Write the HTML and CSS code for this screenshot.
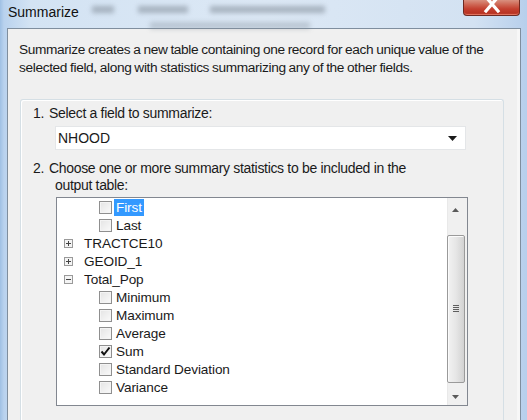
FILE: index.html
```html
<!DOCTYPE html>
<html>
<head>
<meta charset="utf-8">
<link rel="stylesheet" href="styles.css">
</head>
<body>
<div class="window">
  <div class="titlebar">
    <div class="title">Summarize</div>
    <div class="ghosts">
      <span class="ghost g1"></span>
      <span class="ghost g2"></span>
      <span class="ghost g3"></span>
      <span class="ghost g4"></span>
    </div>
    <div class="close">
      <svg width="22" height="13" viewBox="0 0 22 13"><path d="M5 -3 L17 11 M17 -3 L5 11" stroke="#ffffff" stroke-width="3.2" stroke-linecap="square"/></svg>
    </div>
  </div>
  <div class="frame">
    <div class="content">
      <p class="desc">Summarize creates a new table containing one record for each unique value of the selected field, along with statistics summarizing any of the other fields.</p>
      <div class="group">
        <div class="step"><span class="num">1.</span><span class="steptext">Select a field to summarize:</span></div>
        <div class="combo">
          <span class="combo-value">NHOOD</span>
          <svg class="combo-arrow" width="9" height="5" viewBox="0 0 9 5"><path d="M0 0 H9 L4.5 5 Z" fill="#1a1a1a"/></svg>
        </div>
        <div class="step step2"><span class="num">2.</span><span class="steptext hang">Choose one or more summary statistics to be included in the output table:</span></div>
        <div class="listbox">
          <div class="tree">
            <div class="row leaf"><span class="cb"></span><span class="label sel">First</span></div>
            <div class="row leaf"><span class="cb"></span><span class="label">Last</span></div>
            <div class="row node"><svg class="exp" width="9" height="9" viewBox="0 0 9 9"><rect x="0.5" y="0.5" width="8" height="8" fill="#f4f4f4" stroke="#9a9a9a"/><path d="M2 4.5 H7 M4.5 2 V7" stroke="#444" stroke-width="1"/></svg><span class="label">TRACTCE10</span></div>
            <div class="row node"><svg class="exp" width="9" height="9" viewBox="0 0 9 9"><rect x="0.5" y="0.5" width="8" height="8" fill="#f4f4f4" stroke="#9a9a9a"/><path d="M2 4.5 H7 M4.5 2 V7" stroke="#444" stroke-width="1"/></svg><span class="label">GEOID_1</span></div>
            <div class="row node"><svg class="exp" width="9" height="9" viewBox="0 0 9 9"><rect x="0.5" y="0.5" width="8" height="8" fill="#f4f4f4" stroke="#9a9a9a"/><path d="M2 4.5 H7" stroke="#444" stroke-width="1"/></svg><span class="label">Total_Pop</span></div>
            <div class="row leaf"><span class="cb"></span><span class="label">Minimum</span></div>
            <div class="row leaf"><span class="cb"></span><span class="label">Maximum</span></div>
            <div class="row leaf"><span class="cb"></span><span class="label">Average</span></div>
            <div class="row leaf"><span class="cb checked"><svg width="11" height="11" viewBox="0 0 11 11"><path d="M1.5 5.5 L4 8.5 L9.5 1.5" fill="none" stroke="#111" stroke-width="2"/></svg></span><span class="label">Sum</span></div>
            <div class="row leaf"><span class="cb"></span><span class="label">Standard Deviation</span></div>
            <div class="row leaf"><span class="cb"></span><span class="label">Variance</span></div>
          </div>
          <div class="scrollbar">
            <div class="sb-btn"><svg width="7" height="4" viewBox="0 0 7 4"><path d="M0 4 H7 L3.5 0 Z" fill="#5a5a5a"/></svg></div>
            <div class="thumb">
              <div class="grip"><span></span><span></span><span></span><span></span></div>
            </div>
            <div class="sb-btn down"><svg width="7" height="4" viewBox="0 0 7 4"><path d="M0 0 H7 L3.5 4 Z" fill="#5a5a5a"/></svg></div>
          </div>
        </div>
      </div>
    </div>
  </div>
</div>
</body>
</html>
```

FILE: styles.css
```css
html, body {
  margin: 0;
  padding: 0;
}
body {
  width: 527px;
  height: 420px;
  overflow: hidden;
  font-family: "Liberation Sans", Arial, sans-serif;
  font-size: 14px;
  color: #1a1a1a;
}
.window {
  width: 527px;
  height: 420px;
  display: flex;
  flex-direction: column;
  background: linear-gradient(90deg, #9fc0e4 0px, #b9d2ee 4px, #d3e3f3 30px, #dce8f5 50%, #d3e2f2 90%, #b7cfec 100%);
  overflow: hidden;
}
.titlebar {
  height: 28px;
  flex: none;
  display: flex;
  align-items: flex-start;
  position: relative;
}
.title {
  padding: 4px 0 0 8px;
  line-height: 16px;
  font-size: 14px;
  color: #111;
  position: relative;
  z-index: 2;
}
.ghosts {
  position: absolute;
  left: 0;
  top: 0;
  width: 527px;
  height: 28px;
  z-index: 1;
}
.ghost {
  position: absolute;
  display: block;
  height: 7px;
  background: #7d8894;
  filter: blur(2.5px);
  opacity: 0.55;
}
.g1 { left: 92px; top: 6px; width: 22px; }
.g2 { left: 138px; top: 6px; width: 50px; }
.g3 { left: 210px; top: 6px; width: 115px; }
.g4 { left: 150px; top: 22px; width: 160px; opacity: 0.35; }
.close {
  margin-left: auto;
  margin-right: 7px;
  width: 57px;
  height: 16px;
  box-sizing: border-box;
  border: 1px solid #6e2a22;
  border-top: none;
  border-radius: 0 0 4px 4px;
  background: linear-gradient(180deg, #d9907f 0px, #cd6250 5px, #c33f2f 9px, #b93424 13px, #c8553f 16px);
  display: flex;
  justify-content: center;
  align-items: flex-start;
  position: relative;
  z-index: 2;
  box-shadow: inset 0 -1px 0 rgba(255,160,140,0.5);
}
.close svg {
  display: block;
}
.frame {
  flex: 1;
  display: flex;
  padding-left: 7px;
}
.content {
  width: 514px;
  box-sizing: border-box;
  border: 1px solid #7f8e9e;
  border-bottom: none;
  background: #f0f0f0;
  padding: 12px 0 0 11px;
  box-shadow: inset -3px 0 0 #f7f7f7;
}
.desc {
  margin: 0;
  line-height: 18px;
  width: 492px;
  font-size: 13.7px;
  letter-spacing: -0.36px;
  word-spacing: -0.5px;
}
.group {
  margin: 22px 0 0 1px;
  width: 484px;
  height: 340px;
  box-sizing: border-box;
  border: 1px solid #d5dfe5;
  border-bottom: none;
  border-radius: 3px 3px 0 0;
  box-shadow: inset 1px 1px 0 #ffffff;
  padding: 4px 0 0 12px;
}
.step {
  display: flex;
  line-height: 18px;
  letter-spacing: -0.32px;
}
.num {
  width: 16px;
  flex: none;
}
.step2 {
  margin-top: 10px;
  line-height: 17px;
}
.hang {
  padding-left: 6px;
  text-indent: -6px;
  width: 380px;
}
.combo {
  margin: 4px 0 0 22px;
  width: 411px;
  height: 24px;
  box-sizing: border-box;
  border: 1px solid #e4e6e8;
  background: #ffffff;
  display: flex;
  align-items: center;
  padding: 0 8px 0 2px;
}
.combo-value {
  flex: 1;
}
.combo-arrow {
  display: block;
  margin-top: 1px;
}
.listbox {
  margin: 3px 0 0 23px;
  width: 412px;
  height: 209px;
  box-sizing: border-box;
  border: 1px solid #828790;
  background: #ffffff;
  display: flex;
}
.tree {
  flex: 1;
  padding-top: 0;
  font-size: 13.6px;
  letter-spacing: -0.1px;
}
.row {
  height: 18px;
  display: flex;
  align-items: center;
}
.node {
  padding-left: 7px;
}
.leaf {
  padding-left: 42px;
}
.exp {
  display: block;
  flex: none;
  margin-right: 9px;
}
.cb {
  width: 13px;
  height: 13px;
  box-sizing: border-box;
  border: 1px solid #8f8f8f;
  background: linear-gradient(135deg, #e4e4e4, #fafafa);
  box-shadow: inset 0 0 0 1px #f4f4f4;
  margin-right: 2px;
  flex: none;
  display: flex;
  align-items: center;
  justify-content: center;
}
.cb svg {
  display: block;
}
.label {
  padding: 0 2px;
  line-height: 17px;
}
.sel {
  background: #3399ff;
  color: #ffffff;
}
.scrollbar {
  width: 20px;
  flex: none;
  background: #f0f0f0;
  display: flex;
  flex-direction: column;
  box-shadow: inset 1px 0 0 #e9e9e9;
}
.sb-btn {
  height: 35px;
  display: flex;
  justify-content: center;
  align-items: center;
  padding-right: 3px;
  padding-bottom: 10px;
  box-sizing: border-box;
}
.sb-btn.down {
  height: 22px;
  padding-bottom: 0;
  padding-top: 6px;
}
.thumb {
  height: 149px;
  margin: 2px 2px 0 0;
  box-sizing: border-box;
  border: 1px solid #9a9a9a;
  border-radius: 2px;
  background: linear-gradient(90deg, #f2f2f2 0%, #e6e6e6 50%, #d2d2d2 100%);
  box-shadow: inset 1px 1px 0 #fbfbfb;
  display: flex;
  align-items: center;
  justify-content: center;
}
.grip {
  display: flex;
  flex-direction: column;
  gap: 1px;
}
.grip span {
  display: block;
  width: 6px;
  height: 1px;
  background: #5e5e5e;
}
```
